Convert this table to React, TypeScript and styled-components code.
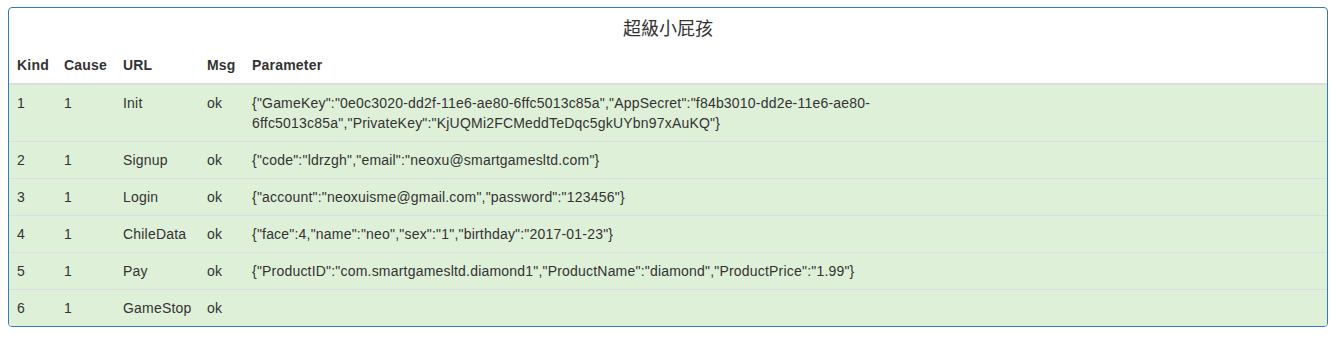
import styled, { createGlobalStyle } from "styled-components";

const GlobalStyle = createGlobalStyle`
  body {
    margin: 0;
    background-color: #ffffff;
    font-family: "Liberation Sans", Arial, "Noto Sans CJK TC", sans-serif;
    font-size: 14px;
    color: #333333;
  }
`;

const Page = styled.div`
  padding: 7px 8px;
`;

const Panel = styled.div`
  border: 1px solid #337ab7;
  border-radius: 4px;
  overflow: hidden;
  background-color: #ffffff;
`;

const Title = styled.div`
  height: 39px;
  box-sizing: border-box;
  padding-top: 10px;
  text-align: center;
  font-family: "Liberation Sans", "Noto Sans CJK TC", sans-serif;
  font-size: 18px;
  line-height: 22px;
  color: #333333;
`;

const Table = styled.table`
  width: 100%;
  border-collapse: collapse;
  table-layout: fixed;
  letter-spacing: 0.2px;
`;

const HeadCell = styled.th<{ w?: number }>`
  width: ${(props) => (props.w ? `${props.w}px` : "auto")};
  padding: 8px;
  text-align: left;
  font-weight: bold;
  line-height: 20px;
  vertical-align: bottom;
  border-bottom: 2px solid #dddddd;
  box-sizing: border-box;
`;

const Row = styled.tr`
  background-color: #dff0d8;

  & + & td {
    border-top: 1px solid #dddddd;
  }
`;

const Cell = styled.td`
  padding: 8px;
  line-height: 20px;
  vertical-align: top;
  white-space: nowrap;
`;

const ParamCell = styled.td`
  padding: 8px;
  line-height: 20px;
  vertical-align: top;
`;

const ParamText = styled.div`
  max-width: 625px;
  word-wrap: break-word;
`;

const COLUMNS = [
  { name: "Kind", w: 47 },
  { name: "Cause", w: 59 },
  { name: "URL", w: 84 },
  { name: "Msg", w: 45 },
  { name: "Parameter" },
];

const ROWS = [
  {
    kind: 1,
    cause: 1,
    url: "Init",
    msg: "ok",
    param:
      '{"GameKey":"0e0c3020-dd2f-11e6-ae80-6ffc5013c85a","AppSecret":"f84b3010-dd2e-11e6-ae80-6ffc5013c85a","PrivateKey":"KjUQMi2FCMeddTeDqc5gkUYbn97xAuKQ"}',
  },
  {
    kind: 2,
    cause: 1,
    url: "Signup",
    msg: "ok",
    param: '{"code":"ldrzgh","email":"neoxu@smartgamesltd.com"}',
  },
  {
    kind: 3,
    cause: 1,
    url: "Login",
    msg: "ok",
    param: '{"account":"neoxuisme@gmail.com","password":"123456"}',
  },
  {
    kind: 4,
    cause: 1,
    url: "ChileData",
    msg: "ok",
    param: '{"face":4,"name":"neo","sex":"1","birthday":"2017-01-23"}',
  },
  {
    kind: 5,
    cause: 1,
    url: "Pay",
    msg: "ok",
    param:
      '{"ProductID":"com.smartgamesltd.diamond1","ProductName":"diamond","ProductPrice":"1.99"}',
  },
  { kind: 6, cause: 1, url: "GameStop", msg: "ok", param: "" },
];

const App = () => {
  return (
    <Page>
      <GlobalStyle />
      <Panel>
        <Title>超級小屁孩</Title>
        <Table>
          <thead>
            <tr>
              {COLUMNS.map((col) => (
                <HeadCell key={col.name} w={col.w}>
                  {col.name}
                </HeadCell>
              ))}
            </tr>
          </thead>
          <tbody>
            {ROWS.map((row) => (
              <Row key={row.kind}>
                <Cell>{row.kind}</Cell>
                <Cell>{row.cause}</Cell>
                <Cell>{row.url}</Cell>
                <Cell>{row.msg}</Cell>
                <ParamCell>
                  <ParamText>{row.param}</ParamText>
                </ParamCell>
              </Row>
            ))}
          </tbody>
        </Table>
      </Panel>
    </Page>
  );
};

export default App;
